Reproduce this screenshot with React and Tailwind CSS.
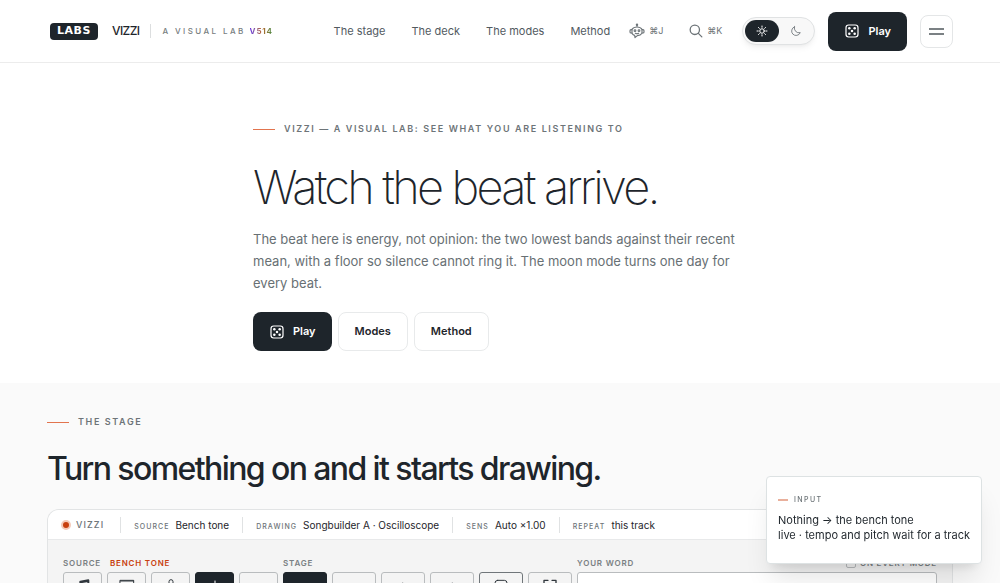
import React, { useState } from 'react';

const navLinks = [
  { label: 'The stage', href: '#stage' },
  { label: 'The deck', href: '#deck' },
  { label: 'The modes', href: '#modes' },
  { label: 'Method', href: '#method' },
];

const readouts = [
  { label: 'Source', value: 'Bench tone' },
  { label: 'Drawing', value: 'Songbuilder A · Oscilloscope' },
  { label: 'Sens', value: 'Auto ×1.00' },
  { label: 'Repeat', value: 'this track' },
];

const Icon = ({ size = 14, strokeWidth = 1.5, children }) => (
  <svg
    width={size}
    height={size}
    viewBox="0 0 24 24"
    fill="none"
    stroke="currentColor"
    strokeWidth={strokeWidth}
    strokeLinecap="round"
    strokeLinejoin="round"
    aria-hidden="true"
    className="shrink-0"
  >
    {children}
  </svg>
);

const DiceIcon = () => (
  <Icon size={16} strokeWidth={1.8}>
    <rect x="3" y="3" width="18" height="18" rx="4" />
    <g fill="currentColor" stroke="none">
      <circle cx="8" cy="8" r="1.9" />
      <circle cx="16" cy="8" r="1.9" />
      <circle cx="12" cy="12" r="1.9" />
      <circle cx="8" cy="16" r="1.9" />
      <circle cx="16" cy="16" r="1.9" />
    </g>
  </Icon>
);

const RobotIcon = () => (
  <Icon size={16} strokeWidth={1.7}>
    <path d="M12 6V2.5M4.5 9.5C6 7 9 6 12 6s6 1 7.500 3.500v6C18 18 15.500 19 12.500 19L9 22l-.5-3.500C6.500 18 5.500 17 4.500 15.500z" />
    <path d="M4.500 10H3a1.500 1.500 0 0 0-1.500 1.500v2A1.500 1.500 0 0 0 3 15h1.500M19.500 10H21a1.500 1.500 0 0 1 1.500 1.500v2A1.500 1.500 0 0 1 21 15h-1.500" />
    <circle cx="12" cy="2.500" r="1" />
    <circle cx="9" cy="11.500" r="1.300" />
    <circle cx="15" cy="11.500" r="1.300" />
    <path d="M9.500 15.500c1.500.8 3.500.8 5 0" />
  </Icon>
);

const SearchIcon = () => (
  <Icon size={14} strokeWidth={2.2}>
    <circle cx="10" cy="10" r="8" />
    <path d="m16 16 6 6" />
  </Icon>
);

const SunIcon = () => (
  <Icon size={12} strokeWidth={2}>
    <circle cx="12" cy="12" r="4.500" />
    <path d="M12 2v2.500M12 19.500V22M2 12h2.500M19.500 12H22M4.900 4.900l1.800 1.800M17.300 17.300l1.800 1.800M4.900 19.100l1.800-1.800M17.300 6.700l1.800-1.800" />
  </Icon>
);

const MoonIcon = () => (
  <Icon size={12} strokeWidth={1.7}>
    <path d="M9 3.500a9 9 0 1 0 11.500 11.800A9.500 9.500 0 0 1 9 3.500z" />
  </Icon>
);

const sources = [
  { name: 'File', icon: <path d="M8 18V4l12-2v14M8 5l12-2" strokeWidth="3" /> },
  { name: 'Tab audio', icon: <path d="M2 2h20v14H2zM2 3h20" /> },
  { name: 'Microphone', icon: <path d="M9 12V4a3 3 0 0 1 6 0v8a3 3 0 0 1-6 0M5 12a7 7 0 0 0 14 0" /> },
  { name: 'Bench tone', active: true, icon: <path d="M12 3v18M7 9v6M17 9v6" /> },
  { name: 'Off', icon: <path d="M5 12h14" /> },
];

const stages = [
  { name: 'Run', active: true, icon: <path d="m8 10 10 6-10 6z" /> },
  { name: 'Previous', icon: <path d="M5 14h14" /> },
  { name: 'Next', icon: <path d="m12 6 4 6" /> },
  { name: 'Freeze', icon: <path d="m12 6-4 6" /> },
  { name: 'Random', outlined: true, icon: <rect x="3" y="2" width="18" height="18" rx="4" /> },
  { name: 'Fullscreen', icon: <path d="M9 2H3v6M15 2h6v6M3 16v6h6M21 16v6h-6" strokeWidth="2" /> },
];

const Eyebrow = ({ children }) => (
  <p className="flex items-center gap-[9px] text-[9px] leading-[14px] font-semibold uppercase tracking-[0.18em] text-[#6d7478]">
    <span className="h-px w-[22px] shrink-0 bg-[#e2744e]" />
    {children}
  </p>
);

const PlayButton = () => (
  <button type="button" className="flex h-[39px] items-center gap-2 rounded-lg bg-[#1e252b] px-4 text-[11px] font-semibold text-white">
    <DiceIcon />
    Play
  </button>
);

const ToolButton = ({ tool, width }) => {
  const look = tool.active
    ? 'border-[#1e252b] bg-[#1e252b] text-white'
    : tool.outlined
      ? 'border-[#70767a] text-[#30373d]'
      : 'border-[#b9bcbe] text-[#30373d]';
  return (
    <button type="button" aria-label={tool.name} className={`flex h-[30px] items-center justify-center rounded-[3px] border ${width} ${look}`}>
      <Icon size={16}>{tool.icon}</Icon>
    </button>
  );
};

const Header = () => {
  const [dark, setDark] = useState(false);

  return (
    <header className="flex h-[63px] items-center justify-between border-b border-[#ececec] bg-white px-[47px]">
      <div className="flex items-center pl-[3px]">
        <a href="#top" className="flex h-[17px] w-12 items-center justify-center rounded bg-[#1e252b] font-['DejaVu_Sans'] text-[11px] font-bold tracking-wider text-white">
          LABS
        </a>
        <a href="#top" className="ml-[14px] text-xs font-medium tracking-tighter text-[#1e252b]">VIZZI</a>
        <span className="mx-[11px] h-[14px] w-px bg-[#dcdedf]" />
        <span className="text-[8px] font-medium whitespace-nowrap tracking-[0.3em] text-[#777d80]">A VISUAL LAB</span>
        <span className="ml-1 bg-linear-to-r from-[#6a2be0] via-[#b8642a] to-[#2c8a45] bg-clip-text text-[8px] font-bold tracking-widest text-transparent">V514</span>
      </div>

      <div className="flex items-center">
        <nav className="flex gap-[26px] text-[11px] whitespace-nowrap text-[#525a5f]">
          {navLinks.map(link => (
            <a key={link.href} href={link.href}>{link.label}</a>
          ))}
        </nav>
        <button type="button" aria-label="Assistant" className="ml-[19px] flex items-center gap-1 text-[9px] text-[#6d7478]">
          <RobotIcon />
          ⌘J
        </button>
        <button type="button" aria-label="Search" className="ml-[26px] flex items-center gap-1 text-[9px] text-[#6d7478]">
          <SearchIcon />
          ⌘K
        </button>
        <div className="ml-5 flex h-7 w-[73px] items-center rounded-full border border-[#e0e2e3] bg-[#f8f8f8] px-[2px] shadow-md shadow-black/5">
          <button type="button" aria-label="Light theme" aria-pressed={!dark} onClick={() => setDark(false)} className="flex h-[22px] w-[34px] items-center justify-center rounded-full bg-[#1e252b] text-white">
            <SunIcon />
          </button>
          <button type="button" aria-label="Dark theme" aria-pressed={dark} onClick={() => setDark(true)} className="flex h-[22px] w-[33px] items-center justify-center rounded-full text-[#6d7478]">
            <MoonIcon />
          </button>
        </div>
        <div className="ml-[13px]">
          <PlayButton />
        </div>
        <button type="button" aria-label="Menu" className="ml-[13px] flex size-[33px] flex-col items-center justify-center gap-[3px] rounded-lg border border-[#e4e6e7]">
          <span className="h-[2px] w-[15px] bg-[#7b8184]" />
          <span className="h-[2px] w-[15px] bg-[#7b8184]" />
        </button>
      </div>
    </header>
  );
};

const Hero = () => (
  <section className="bg-white px-[47px] pt-[59px] pb-8">
    <div className="mx-auto max-w-[494px]">
      <Eyebrow>Vizzi — a visual lab: see what you are listening to</Eyebrow>
      <h1 className="mt-6 text-[47px] leading-[54px] font-extralight whitespace-nowrap tracking-[-0.06em] text-[#1e252b]">
        Watch the beat arrive.
      </h1>
      <p className="mt-[14px] text-[13px] leading-[22px] text-[#687074]">
        The beat here is energy, not opinion: the two lowest bands against their recent mean, with a floor so silence cannot ring it. The moon mode turns one day for every beat.
      </p>
      <div className="mt-[18px] flex gap-[6px] text-[11px] font-semibold text-[#1e252b]">
        <PlayButton />
        <a href="#modes" className="flex h-[39px] items-center rounded-lg border border-[#e8eaeb] px-4">Modes</a>
        <a href="#method" className="flex h-[39px] items-center rounded-lg border border-[#e8eaeb] px-4">Method</a>
      </div>
    </div>
  </section>
);

const groupLabel = 'text-[8px] leading-[10px] font-semibold uppercase tracking-widest text-[#7a8083]';

const Stage = () => (
  <section id="stage" className="bg-[#fafafa] px-[47px] pt-8">
    <Eyebrow>The stage</Eyebrow>
    <h2 className="mt-5 text-[32px] leading-10 font-medium tracking-[-0.05em] text-[#1e252b]">
      Turn something on and it starts drawing.
    </h2>
    <div className="mt-5 overflow-hidden rounded-t-xl border border-b-0 border-[#e2e4e5] bg-[#f4f4f4]">
      <div className="flex h-[30px] items-center border-b border-[#e8e9ea] bg-white px-[13px] whitespace-nowrap">
        <span className="size-[10px] rounded-full border-2 border-[#f4c9b8] bg-[#c8400f]" />
        <span className="ml-[5px] text-[9px] font-medium tracking-[0.12em] text-[#6d7478]">VIZZI</span>
        <dl className="ml-[3px] flex">
          {readouts.map(item => (
            <div key={item.label} className="ml-[13px] flex items-baseline gap-[6px] border-l border-[#e0e2e3] pl-[13px]">
              <dt className="text-[7px] font-medium uppercase tracking-[0.15em] text-[#6d7478]">{item.label}</dt>
              <dd className="text-[10px] leading-4 text-[#1e252b]">{item.value}</dd>
            </div>
          ))}
        </dl>
      </div>

      <div className="flex gap-[5px] px-[15px] pt-[18px]">
        <div>
          <div className={`flex gap-[9px] ${groupLabel}`}>
            <span>Source</span>
            <span className="text-[#c8400f]">Bench tone</span>
          </div>
          <div className="mt-1 flex gap-[5px]">
            {sources.map(tool => (
              <ToolButton key={tool.name} tool={tool} width="w-[39px]" />
            ))}
          </div>
        </div>
        <div>
          <div className={groupLabel}>Stage</div>
          <div className="mt-1 flex gap-[5px]">
            {stages.map(tool => (
              <ToolButton key={tool.name} tool={tool} width="w-[44px]" />
            ))}
          </div>
        </div>
        <div className="min-w-0 flex-1">
          <div className="flex h-[10px] items-center justify-between">
            <label htmlFor="word" className={groupLabel}>Your word</label>
            <label className={`flex items-center gap-1 whitespace-nowrap ${groupLabel}`}>
              <input type="checkbox" className="size-[10px] appearance-none rounded-[2px] border border-[#b9bcbe]" />
              On every mode
            </label>
          </div>
          <input id="word" type="text" className="mt-1 h-[30px] w-full rounded-[3px] border border-[#b9bcbe] bg-white px-2 text-xs" />
        </div>
      </div>
    </div>
  </section>
);

const InputNotice = () => (
  <aside className="fixed right-[18px] bottom-[19px] rounded border border-[#dde2e3] bg-white px-[11px] pt-[18px] pb-[20px] shadow-xl shadow-black/10">
    <p className="flex items-center gap-[6px] text-[7px] leading-[10px] font-medium tracking-[0.2em] text-[#6d7478]">
      <span className="h-[2px] w-[10px] bg-[#e9b09c]" />
      INPUT
    </p>
    <p className="mt-2 text-[11px] leading-[15px] whitespace-nowrap text-[#1e252b]">
      Nothing → the bench tone
      <br />
      live · tempo and pitch wait for a track
    </p>
  </aside>
);

const App = () => (
  <div id="top" className="min-h-screen bg-[#fafafa] font-[Inter,sans-serif]">
    <Header />
    <main>
      <Hero />
      <Stage />
    </main>
    <InputNotice />
  </div>
);

export default App;
